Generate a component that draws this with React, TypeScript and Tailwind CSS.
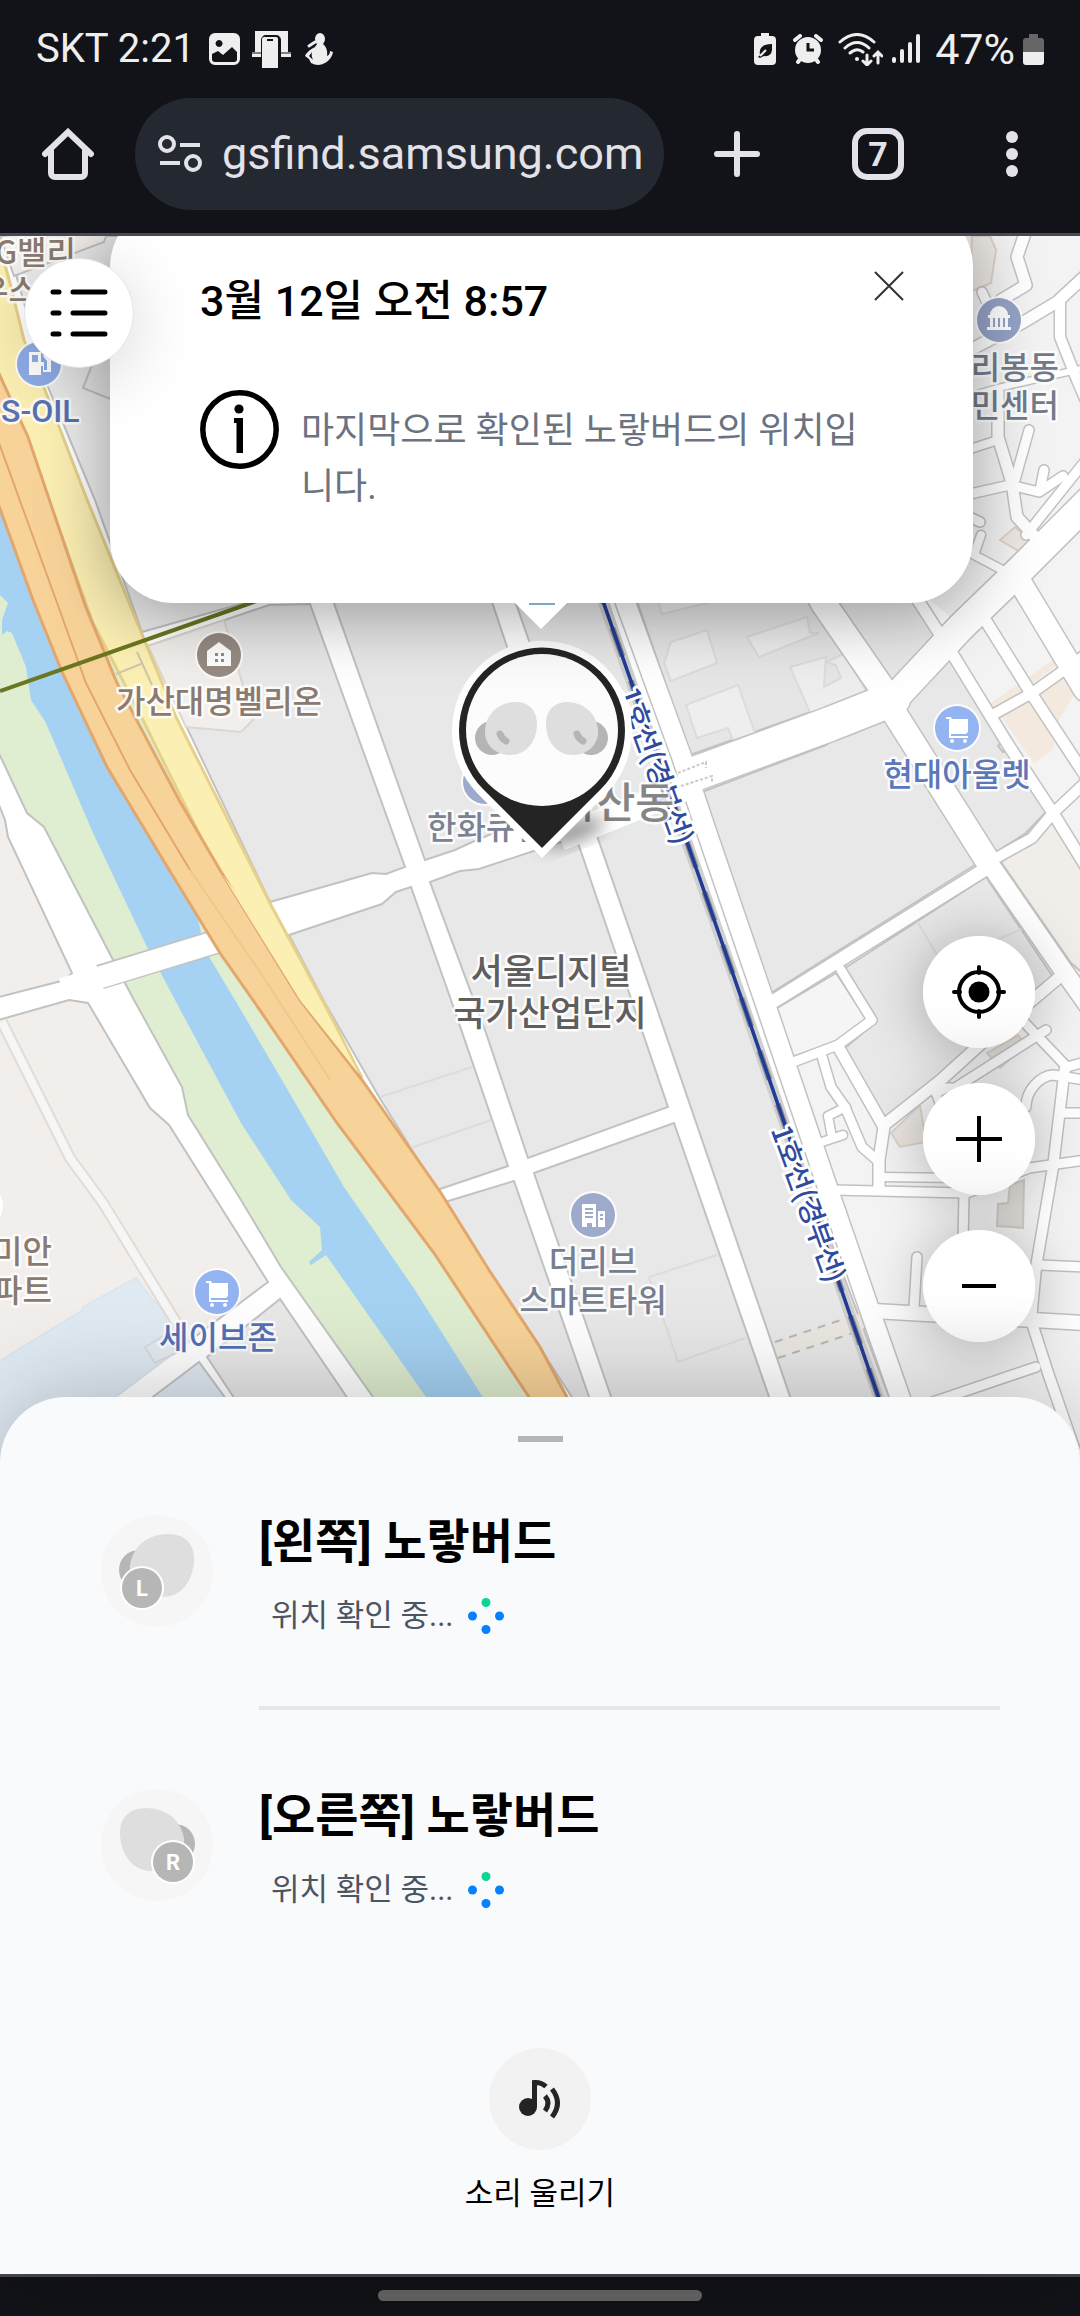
import { ReactNode } from "react";

const FONT = "font-[Roboto,'Noto_Sans_CJK_KR',sans-serif]";

const GREY = "#e8e8e8";
const PALE = "#f3f3f3";
const BEIGE = "#f1eeeb";
const PEACH = "#f4e9df";
const ICE = "#e0eaf3";

interface Block {
  points: string;
  fill: string;
  stroke?: string;
}

interface Road {
  d: string;
  w: number;
}

const blocks: Block[] = [
  // west bank
  { points: "-5,795 5,820 8,837 72,973 65,980 -5,998", fill: BEIGE },
  { points: "-5,1021 69,1000 88,1003 150,1108 169,1125 268,1282 115,1397 -5,1485", fill: BEIGE },
  { points: "-5,1364 83,1310 83,1307 136,1278 155,1303 157,1302 176,1325 190,1341 115,1397 -5,1485", fill: ICE, stroke: "#dbe6ee" },
  { points: "280,1299 207,1357 262,1440 376,1440", fill: GREY },
  { points: "199,1362 96,1440 256,1440", fill: ICE },
  { points: "145,1347 165,1335 176,1353 155,1363", fill: "#e6ecf1", stroke: "#d8dcdf" },
  // between the expressway and the railway
  { points: "5,236 330,236 290,590 142,632 95,500 48,387", fill: "#ebebeb" },
  { points: "0,236 110,225 104,242 14,276", fill: BEIGE },
  { points: "83,388 92,365 120,340 150,415", fill: GREY },
  { points: "148,646 269,605 310,604 405,867 386,874 372,873 270,902", fill: GREY },
  { points: "148,646 224,620 253,720 241,732 186,727", fill: BEIGE, stroke: "#ddd7d0" },
  { points: "324,575 483,575 560,805 470,843 455,850 425,860", fill: GREY },
  { points: "506,575 600,575 668,795 590,815", fill: GREY },
  { points: "430,882 460,871 479,869 576,837 668,1107 528,1158 486,1033", fill: GREY },
  { points: "289,935 382,904 396,892 411,887 451,1000 508,1166 437,1190 379,1097 325,1003", fill: GREY },
  { points: "445,1202 514,1181 604,1440 600,1440 489,1270", fill: GREY },
  { points: "534,1173 674,1123 784,1440 626,1440", fill: GREY },
  { points: "595,830 668,805 905,1440 805,1440 654,1000", fill: GREY },
  // east of the railway
  { points: "628,575 796,575 872,698 846,708 822,708 690,755", fill: "#e6e6e6" },
  { points: "820,575 900,575 938,638 890,687", fill: GREY },
  { points: "702,792 826,745 850,728 884,716 978,863 771,993", fill: GREY },
  { points: "901,706 950,657 1003,740 998,746 1003,752 1010,750 1048,810 1026,833 996,852", fill: GREY },
  { points: "1001,862 1029,843 1052,818 1085,872 1085,975 1071,963", fill: "#f1ede9" },
  { points: "845,968 986,877 1053,977 969,1050 884,1120 845,1048 876,1022", fill: GREY },
  { points: "774,1010 836,973 867,1020 835,1043 788,1058", fill: "#f5f5f5" },
];

const outlines = [
  "664,663 671,642 707,630 717,663 671,681",
  "747,637 807,617 810,633 819,633 759,657",
  "686,705 738,685 755,733 733,740 728,728 697,738",
  "790,667 826,657 824,687 841,678 836,665 826,662 845,653 869,697 812,717",
  "658,600 662,614 720,600",
];

const patches = [
  "991,703 1053,660 1057,665 996,712",
  "1001,717 1029,700 1055,737 1053,750 1034,763",
  "1036,695 1063,675 1074,695 1057,723",
];

const roads: Road[] = [
  { d: "M697 773 L830 724 L893 699", w: 34 },
  { d: "M808 575 L824 604 L893 704", w: 25 },
  { d: "M891 702 L960 628 L1022 568 L1090 500", w: 28 },
  { d: "M893 711 L987 860", w: 24 },
  { d: "M987 860 L1063 970 L1090 1008", w: 18 },
  { d: "M774 1001 L984 870", w: 13 },
  { d: "M841 970 L872 1020 L838 1045 L788 1064", w: 9 },
  { d: "M905 580 L950 650 L1007 743 L1053 813 L1085 865", w: 11 },
  { d: "M984 618 L1029 690 L1085 775", w: 11 },
  { d: "M996 713 L1032 693 L1067 668 L1085 655", w: 10 },
  { d: "M1020 582 L1085 690", w: 22 },
  { d: "M998 857 L1032 838 L1053 813 L1085 783", w: 10 },
  { d: "M821 1053 L831 1087 L845 1107 L862 1147 L877 1160", w: 9 },
  { d: "M840 1050 L884 1127 L879 1160 L879 1187", w: 11 },
  { d: "M884 1125 L941 1080 L985 1040 L1062 975", w: 11 },
  { d: "M833 1190 L967 1193 L1029 1168 L1085 1160", w: 9 },
  { d: "M881 1177 L960 1178", w: 8 },
  { d: "M846 1107 L828 1116 L832 1137", w: 8 },
  { d: "M819 1143 L843 1135", w: 8 },
  { d: "M964 1195 L962 1290", w: 9 },
  { d: "M917 1257 L914 1308", w: 9 },
  { d: "M874 1311 L1085 1323", w: 14 },
  { d: "M1065 1067 L1053 1167 L1036 1267 L1031 1320 L1048 1373 L1080 1465", w: 10 },
  { d: "M1039 1265 L1085 1267", w: 9 },
  { d: "M1063 1113 L1085 1113", w: 9 },
  { d: "M1026 1107 C1026 1090 1040 1076 1053 1075 L1085 1080", w: 9 },
  { d: "M1022 1020 L1067 1067 L1085 1062", w: 9 },
  { d: "M936 1093 L946 1088 L955 1088 L1046 1030", w: 9 },
  { d: "M940 1083 L936 1093 L945 1120", w: 8 },
  { d: "M1036 1367 L930 1403", w: 9 },
  { d: "M1026 230 L1017 257 L1026 285 L1001 300 L990 320", w: 11 },
  { d: "M982 292 L995 320", w: 9 },
  { d: "M1085 276 L1057 302 L1022 323 L970 350", w: 11 },
  { d: "M1060 303 L1060 337 L1077 380 L1090 410", w: 10 },
  { d: "M1085 368 L998 388 L970 396", w: 6 },
  { d: "M998 392 L998 437 L1012 483 L1017 517 L1045 548", w: 11 },
  { d: "M1029 430 L1015 480", w: 9 },
  { d: "M970 449 L998 440", w: 8 },
  { d: "M970 494 L1010 485 L1039 492 L1063 476", w: 9 },
  { d: "M1044 470 L1040 490", w: 9 },
  { d: "M1026 535 L1090 455", w: 9 },
  { d: "M965 515 L980 522", w: 9 },
  { d: "M981 535 L974 555 L1012 575", w: 8 },
];

const pale =
  "580,236 1085,236 1085,1465 930,1465 771,993 987,868 893,711 960,625 900,575";

function Poi({ x, y, fill, children }: { x: number; y: number; fill: string; children?: ReactNode }) {
  return (
    <g transform={`translate(${x} ${y})`}>
      <circle r="24" fill="#fff" opacity="0.85" />
      <circle r="22" fill={fill} />
      {children}
    </g>
  );
}

function Cart() {
  return (
    <g fill="#fff">
      <path d="M-11 -11 h5 l1 2 H11 V4 l-2 2 H-6 V8 H11 v2 H-8 V-9 h-3 Z" />
      <circle cx="-5" cy="13" r="2" />
      <circle cx="8" cy="13" r="2" />
    </g>
  );
}

interface LabelProps {
  x: number;
  y: number;
  color: string;
  size?: number;
  anchor?: "start" | "middle" | "end";
  children: string;
}

function Label({ x, y, color, size = 32, anchor = "middle", children }: LabelProps) {
  return (
    <text
      x={x}
      y={y}
      fill={color}
      fontSize={size}
      textAnchor={anchor}
      stroke="#fff"
      strokeOpacity="0.85"
      strokeWidth="5"
      strokeLinejoin="round"
      paintOrder="stroke"
    >
      {children}
    </text>
  );
}

function RailLabel({ x, y }: { x: number; y: number }) {
  return (
    <text
      transform={`translate(${x} ${y}) rotate(70)`}
      fill="#2f4a9e"
      fontSize="28"
      textAnchor="middle"
      dominantBaseline="central"
      stroke="#fff"
      strokeWidth="6"
      strokeLinejoin="round"
      paintOrder="stroke"
    >
      1호선(경부선)
    </text>
  );
}

function Bud({ flip }: { flip?: boolean }) {
  return (
    <>
      <g transform={flip ? "translate(1083 0) scale(-1 1)" : undefined}>
        <circle cx="492" cy="738" r="17" fill="#b5b5b5" />
        <path
          d="M485 730 C486 713 500 702 516 702 C530 702 537 712 537 724 C537 742 526 755 510 755 C496 755 484 745 485 730 Z"
          fill="#dedede"
        />
      </g>
      <path
        d={flip ? "M577 734 Q578 738 583 741" : "M500 734 Q501 738 506 741"}
        fill="none"
        stroke="#b5b5b5"
        strokeWidth="7"
        strokeLinecap="round"
      />
    </>
  );
}

function MapCanvas() {
  return (
    <svg
      viewBox="0 236 1080 1224"
      preserveAspectRatio="xMidYMin slice"
      className="absolute inset-0 h-full w-full font-['Noto_Sans_CJK_KR',sans-serif] font-medium"
      role="img"
      aria-label="지도"
    >
      <defs>
        <filter id="pinShadow" x="-50%" y="-50%" width="200%" height="200%">
          <feGaussianBlur stdDeviation="9" />
        </filter>
      </defs>
      <rect x="-20" y="200" width="1120" height="1300" fill="#fff" />
      <polygon points={pale} fill={PALE} />

      {blocks.map((b) => (
        <polygon key={b.points} points={b.points} fill={b.fill} stroke={b.stroke ?? "#c2c2c2"} strokeWidth="2" />
      ))}
      {outlines.map((p) => (
        <polygon key={p} points={p} fill="#eeeeee" stroke="#dcdcdc" strokeWidth="2" />
      ))}
      <g fill="none" stroke="#dcdcdc" strokeWidth="2">
        <path d="M380 1097 L472 1067 M411 1148 L491 1120 M717 1255 L649 1277 L678 1362 L745 1338" />
        <path d="M917 921 L937 955 M980 947 L1022 929" />
      </g>
      <polygon points="775,1342 865,1312 868,1328 778,1358" fill="#ebe8e2" />
      <path d="M775 1342 L865 1312 M778 1358 L868 1328" stroke="#b8b8b8" strokeWidth="2" strokeDasharray="8 7" />

      {/* residential lane on the west side */}
      <path d="M2 1022 L70 1158 L103 1203 L176 1322" fill="none" stroke="#e3dcd5" strokeWidth="12" />
      <path d="M2 1022 L70 1158 L103 1203 L176 1322" fill="none" stroke="#f6f6f6" strokeWidth="8" />

      {/* river park and water */}
      <path
        d="M-5 480 L41 630 L110 600 L160 740 L240 903 L320 1080 L434 1253 L540 1410 L540 1440 L399 1440 L373 1397 L281 1267 L241 1200 L188 1115 L182 1087 L134 1000 L125 983 L112 958 L44 827 L27 813 L-5 745 Z"
        fill="#dfedd0"
        stroke="#c2c2c2"
        strokeWidth="2"
      />
      <path
        d="M-5 490 L60 610 L130 767 L190 880 L201 933 L208 955 L235 1000 L286 1087 L344 1187 L413 1287 L510 1440 L452 1440 L426 1397 L326 1255 L311 1265 L309 1262 L322 1250 L320 1227 L291 1200 L241 1123 L175 1000 L146 945 L93 833 L46 723 L31 700 L26 667 L12 633 L7 631 L2 635 L2 620 L8 603 L-5 590 Z"
        fill="#a5d2f3"
      />
      <path d="M100 977 L225 939" stroke="#c2c2c2" strokeWidth="25" />
      <path d="M62 989 L235 936" stroke="#fff" strokeWidth="22" />

      {/* expressway */}
      <path
        d="M-5 240 L0 247 L10 283 L24 340 L45 390 L86 497 L130 605 L176 717 L272 907 L325 1005 L362 1078 L300 1020 L207 850 L138 710 L93 623 L62 537 L21 430 L-5 365 Z"
        fill="#fbefb3"
        stroke="#e6d18a"
        strokeWidth="3"
      />
      <path
        d="M-5 365 L28 437 L62 537 L85 605 L117 683 L179 800 L220 870 L300 1000 L362 1080 L441 1193 L489 1270 L540 1347 L590 1440 L558 1440 L529 1397 L434 1253 L337 1123 L255 1003 L220 953 L165 863 L107 767 L62 672 L33 600 L-5 495 Z"
        fill="#f8d399"
        stroke="#e3a76c"
        strokeWidth="3"
      />
      <path d="M222 874 L272 940 L331 1020 L359 1074 L300 1000 Z" fill="#fbefb3" />
      <path d="M-5 432 L56 600 L86 683 L130 770 L190 870" fill="none" stroke="#e3a76c" strokeWidth="2" />
      <path d="M190 870 L262 975 L330 1080" fill="none" stroke="#f2c58c" strokeWidth="2" />
      <path d="M116 674 L141 664 M137 652 L152 685" stroke="#cfc6ae" strokeWidth="2" />
      <path d="M0 691 L248 604 L300 586" fill="none" stroke="#6b7620" strokeWidth="4" />

      {/* railway corridor */}
      <path d="M616 575 L626 604 L681 755 L706 830 L765 1003 L826 1183 L868 1305 L915 1440" fill="none" stroke="#c2c2c2" strokeWidth="22" />

      {/* streets: casings first so the junctions merge */}
      {patches.map((p) => (
        <polygon key={p} points={p} fill={PEACH} />
      ))}
      <polygon points="972,236 990,236 996,250 991,283 970,292" fill="#ece8e4" stroke="#dcd2c8" strokeWidth="2" />
      <polygon points="1015,527 1032,542 1022,553 1000,540" fill="#ede8e3" stroke="#dcd2c8" strokeWidth="2" />
      <polygon points="891,1133 920,1105 926,1142 900,1147" fill="#e9e4e0" stroke="#dcd2c8" strokeWidth="2" />
      <polygon points="1010,1185 1024,1180 1023,1228 997,1226 998,1204 1008,1203" fill="#dfdcd8" stroke="#d2cbc4" strokeWidth="2" />
      <polygon points="987,1053 1018,1035 1026,1045 1000,1068" fill="#e6e1dc" stroke="#dcd2c8" strokeWidth="2" />
      <g fill="none" stroke="#c2c2c2" strokeLinecap="round" strokeLinejoin="round">
        {roads.map((r) => (
          <path key={r.d} d={r.d} strokeWidth={r.w + 3} />
        ))}
      </g>
      <path d="M616 575 L626 604 L681 755 L706 830 L765 1003 L826 1183 L868 1305 L915 1440" fill="none" stroke="#fff" strokeWidth="19" />
      <g fill="none" stroke="#fff" strokeLinecap="round" strokeLinejoin="round">
        {roads.map((r) => (
          <path key={r.d} d={r.d} strokeWidth={r.w} />
        ))}
      </g>
      <path d="M560 838 L690 786" stroke="#fff" strokeWidth="26" />
      <path d="M678 773 L706 762 v6 M681 786 L712 776 v6" fill="none" stroke="#cfc8c0" strokeWidth="2" strokeDasharray="3 2" />

      <g fill="none">
        <path d="M594 575 L604 604 L633 687 L687 842 L742 1000 L785 1125 L838 1280 L895 1445" stroke="#cfcfcf" strokeWidth="11" />
        <path
          d="M594 575 L604 604 L633 687 L687 842 L742 1000 L785 1125 L838 1280 L895 1445"
          stroke="#8d8d95"
          strokeWidth="6"
          strokeDasharray="30 26"
        />
        <path d="M594 575 L604 604 L633 687 L687 842 L742 1000 L785 1125 L838 1280 L895 1445" stroke="#213c94" strokeWidth="3.6" />
      </g>
      <RailLabel x={658} y={765} />
      <RailLabel x={810} y={1203} />

      <Poi x={39} y={364} fill="#8eace6">
        <path d="M-10 -12 h12 v10 h3 v8 h3 v-9 l-4 -5 2 -2 6 6 v12 h-8 v-6 h-2 v9 h-12 Z M-7 -9 v7 h6 v-7 Z" fill="#fff" fillRule="evenodd" />
      </Poi>
      <Poi x={219} y={655} fill="#978b83">
        <path d="M0 -13 L12 -4 V11 H-12 V-4 Z" fill="#fff" />
        <path d="M-4 -2 h3 v3 h-3 Z M2 -2 h3 v3 h-3 Z M-4 4 h3 v3 h-3 Z M2 4 h3 v3 h-3 Z" fill="#978b83" />
      </Poi>
      <Poi x={999} y={320} fill="#95a3c6">
        <path d="M-11 -5 h2 a9 9 0 0 1 18 0 h2 v3 h-2 v9 h3 v3 h-24 v-3 h3 v-9 h-2 Z" fill="#fff" />
        <path d="M-5 -2 v9 M0 -2 v9 M5 -2 v9" stroke="#95a3c6" strokeWidth="2" />
      </Poi>
      <Poi x={957} y={728} fill="#94b3f1">
        <Cart />
      </Poi>
      <Poi x={217} y={1292} fill="#94b3f1">
        <Cart />
      </Poi>
      <Poi x={593} y={1215} fill="#9daacb">
        <path d="M-11 -11 h14 v23 h-4 v-4 h-5 v4 h-5 Z M5 -4 h7 v16 h-7 Z" fill="#fff" />
        <path d="M-8 -6 h8 M-8 -2 h8 M-8 2 h8 M7 0 h3 M7 4 h3" stroke="#9daacb" strokeWidth="2" />
      </Poi>
      <Poi x={485} y={782} fill="#9daacb" />

      <Label x={76} y={264} color="#8a7a70" anchor="end">G밸리</Label>
      <Label x={38} y={302} color="#8a7a70" anchor="end">우스</Label>
      <g className="font-[Roboto,sans-serif]">
        <Label x={1} y={422} color="#5872b4" anchor="start">S-OIL</Label>
      </g>
      <Label x={219} y={713} color="#8a7a70">가산대명벨리온</Label>
      <Label x={1059} y={379} color="#737a8b" anchor="end">리봉동</Label>
      <Label x={1059} y={417} color="#737a8b" anchor="end">민센터</Label>
      <Label x={957} y={786} color="#5b76ba">현대아울렛</Label>
      <Label x={427} y={839} color="#7a8294" anchor="start">한화큐셀</Label>
      <Label x={674} y={818} color="#858585" size={42} anchor="end">가산동</Label>
      <Label x={551} y={984} color="#5e5e5e" size={35}>서울디지털</Label>
      <Label x={550} y={1026} color="#5e5e5e" size={35}>국가산업단지</Label>
      <Label x={593} y={1273} color="#767e90">더리브</Label>
      <Label x={593} y={1312} color="#767e90">스마트타워</Label>
      <Label x={218} y={1349} color="#5571b4">세이브존</Label>
      <Label x={52} y={1263} color="#8a7a70" anchor="end">미안</Label>
      <Label x={52} y={1302} color="#8a7a70" anchor="end">파트</Label>
      <circle cx="-19" cy="1206" r="22" fill="#fff" />

      {/* location pin */}
      <ellipse cx="572" cy="832" rx="34" ry="10" transform="rotate(-20 572 832)" fill="#000" opacity="0.45" filter="url(#pinShadow)" />
      <path d="M542 858 L478 794 A90 90 0 1 1 606 794 Z" fill="#fff" />
      <path d="M542 848 L483 789 A83 83 0 1 1 601 789 Z" fill="#242424" />
      <circle cx="542" cy="730" r="76" fill="#fcfcfc" />
      <Bud />
      <Bud flip />
    </svg>
  );
}

function StatusIcons() {
  return (
    <>
      <svg viewBox="0 0 31 32" className="ml-3.5 h-8 w-[31px]" fill="#eee" aria-hidden="true">
        <path
          fillRule="evenodd"
          d="M6 0 H25 a6 6 0 0 1 6 6 V26 a6 6 0 0 1 -6 6 H6 a6 6 0 0 1 -6 -6 V6 a6 6 0 0 1 6 -6 Z M10 7 a3.5 3.5 0 1 0 .1 0 Z M3 21 V26 a3 3 0 0 0 3 3 H25 a3 3 0 0 0 3 -3 V19 L23 14 L14 22 L9 18 Z"
        />
      </svg>
      <svg viewBox="0 0 39 38" className="ml-3 h-[38px] w-[39px]" fill="#eee" aria-hidden="true">
        <path d="M3 1 H36 V22 H39 V27 H29 V10 a5 5 0 0 0 -5 -5 H14 a5 5 0 0 0 -5 5 V27 H0 V22 H3 Z" />
        <path d="M12 7 H24 a2 2 0 0 1 2 2 V38 H10 V9 a2 2 0 0 1 2 -2 Z M15 9 v2 h6 v-2 Z" fillRule="evenodd" />
        <path d="M0 23 H9 M29 23 H39" stroke="#121318" strokeWidth="1" />
      </svg>
      <svg viewBox="0 0 28 32" className="ml-3.5 h-8 w-7" fill="#eee" aria-hidden="true">
        <ellipse cx="15" cy="6" rx="5" ry="6" />
        <path d="M12 11 L18 11 Q23 15 22 23 Q25 22 25 18 L28 19 Q27 26 20 30 Q13 34 6 30 L4 26 L0 23 Q2 18 10 14 Z M7 19 L4 23 L8 27 Q6 23 7 19 Z" fillRule="evenodd" />
        <path d="M10 9 L4 13" stroke="#eee" strokeWidth="3" strokeLinecap="round" />
      </svg>
    </>
  );
}

function SystemIcons() {
  return (
    <>
      <svg viewBox="0 0 22 32" className="mr-[17px] h-8 w-[22px]" aria-hidden="true">
        <path d="M7 0 H15 V3 H18 a4 4 0 0 1 4 4 V28 a4 4 0 0 1 -4 4 H4 a4 4 0 0 1 -4 -4 V7 a4 4 0 0 1 4 -4 H7 Z" fill="#eee" />
        <path d="M18 11 V17 q-1 7 -8 6 l-4 2 -2 -1 2 -2 q-2 -11 12 -11 Z" fill="#121318" />
        <path d="M6 23 L12 17" stroke="#eee" strokeWidth="2" />
      </svg>
      <svg viewBox="0 0 30 30" className="mr-[15px] h-[30px] w-[30px]" aria-hidden="true">
        <circle cx="15" cy="16" r="13" fill="#eee" />
        <path d="M2 6 L7 2 M28 6 L23 2 M5 28 L8 24 M25 28 L22 24" stroke="#eee" strokeWidth="4" strokeLinecap="round" />
        <path d="M15 9 V16 H21" fill="none" stroke="#121318" strokeWidth="3" />
      </svg>
      <svg viewBox="0 0 45 33" className="mr-[9px] h-[33px] w-[45px]" fill="none" stroke="#eee" strokeWidth="3" strokeLinecap="round" aria-hidden="true">
        <path d="M2 9 Q19 -6 36 9 M7 15 Q19 4 31 15 M12 20 Q19 14 25 19" />
        <circle cx="19" cy="26" r="2" fill="#eee" stroke="none" />
        <path d="M29 22 V31 M25 28 L29 32 L33 28 M40 30 V20 M36 23 L40 19 L44 23" />
      </svg>
      <svg viewBox="0 0 28 30" className="mr-[15px] h-[30px] w-7" stroke="#eee" strokeWidth="4" strokeLinecap="round" aria-hidden="true">
        <path d="M2 25 V27 M10 17 V27 M18 10 V27 M26 2 V27" />
      </svg>
    </>
  );
}

function BrowserBar() {
  return (
    <header className="border-b-[3px] border-[#4a4953] bg-[#121318] text-[#e3e2e9]">
      <div className="flex h-[98px] items-center pr-9 pl-9 text-[40px] text-[#eeeeee]">
        <span>SKT 2:21</span>
        <StatusIcons />
        <div className="ml-auto flex items-center">
          <SystemIcons />
          <span className="text-[43px]">47%</span>
          <svg viewBox="0 0 21 31" className="ml-2 h-[31px] w-[21px]" aria-hidden="true">
            <path d="M6 0 H15 V4 H18 a3 3 0 0 1 3 3 V19 H0 V7 a3 3 0 0 1 3 -3 H6 Z" fill="#666" />
            <path d="M0 18 H21 V28 a3 3 0 0 1 -3 3 H3 a3 3 0 0 1 -3 -3 Z" fill="#eee" />
          </svg>
        </div>
      </div>

      <div className="flex items-center pr-[62px] pb-[23px] pl-[42px]">
        <button type="button" aria-label="홈">
          <svg viewBox="0 0 52 52" className="h-[52px] w-[52px]" fill="none" stroke="currentColor" strokeWidth="6" aria-hidden="true">
            <path d="M3 26 L26 4 L49 26" strokeLinecap="round" />
            <path d="M9 22 V45 a4 4 0 0 0 4 4 H39 a4 4 0 0 0 4 -4 V22" />
          </svg>
        </button>
        <div className="ml-[41px] flex h-28 min-w-0 flex-1 items-center rounded-full bg-[#242831] pr-3.5 pl-[23px]">
          <svg viewBox="0 0 44 38" className="h-[38px] w-11 shrink-0" fill="none" stroke="currentColor" strokeWidth="4" aria-hidden="true">
            <circle cx="9" cy="9" r="7" />
            <circle cx="35" cy="28" r="7" />
            <path d="M22 10 H42 M2 28 H22" />
          </svg>
          <input
            type="text"
            aria-label="주소"
            readOnly
            value="gsfind.samsung.com"
            className="ml-5 min-w-0 flex-1 bg-transparent text-[45px] outline-none"
          />
        </div>
        <button type="button" aria-label="새 탭" className="ml-[50px]">
          <svg viewBox="0 0 46 46" className="h-[46px] w-[46px]" stroke="currentColor" strokeWidth="6" strokeLinecap="round" aria-hidden="true">
            <path d="M23 3 V43 M3 23 H43" />
          </svg>
        </button>
        <button
          type="button"
          aria-label="탭 7개"
          className="ml-[92px] flex h-[52px] w-[52px] items-center justify-center rounded-[15px] border-[6px] border-current text-[34px] leading-none font-bold"
        >
          7
        </button>
        <button type="button" aria-label="메뉴" className="ml-[102px]">
          <svg viewBox="0 0 12 46" className="h-[46px] w-3" fill="currentColor" aria-hidden="true">
            <circle cx="6" cy="6" r="6" />
            <circle cx="6" cy="23" r="6" />
            <circle cx="6" cy="40" r="6" />
          </svg>
        </button>
      </div>
    </header>
  );
}

function InfoCard() {
  return (
    <section className="absolute top-[-33px] right-[107px] left-[110px] rounded-[64px] bg-white pt-[68px] pr-[69px] pb-[88px] pl-[90px] shadow-[0_12px_70px_rgba(0,0,0,0.35)]">
      <div className="flex items-start justify-between">
        <h1 className="text-[43px] leading-[60px] font-medium text-black">3월 12일 오전 8:57</h1>
        <button type="button" aria-label="닫기">
          <svg viewBox="0 0 30 30" className="h-[30px] w-[30px]" stroke="#333" strokeWidth="2" aria-hidden="true">
            <path d="M1 1 L29 29 M29 1 L1 29" />
          </svg>
        </button>
      </div>
      <div className="mt-[59px] flex items-start pr-6">
        <svg viewBox="0 0 79 79" className="h-[79px] w-[79px] shrink-0" aria-hidden="true">
          <circle cx="39.5" cy="39.5" r="36.7" fill="none" stroke="#000" strokeWidth="5.5" />
          <circle cx="39" cy="19" r="4.6" />
          <path d="M34 28 H43 V63 H36.5 V33 H34 Z" />
        </svg>
        <p className="mt-[13px] ml-[22px] text-[36px] leading-[56px] break-all text-[#6b7280]">
          마지막으로 확인된 노랗버드의 위치입니다.
        </p>
      </div>
      <svg viewBox="0 0 52 26" className="absolute top-full left-[405px] h-[26px] w-[52px]" aria-hidden="true">
        <path d="M0 0 H52 L26 26 Z" fill="#fff" />
        <path d="M14 1 H40" stroke="#7ba6c4" strokeWidth="2" />
      </svg>
    </section>
  );
}

const controlClass =
  "flex h-28 w-28 items-center justify-center rounded-full bg-linear-to-b from-white from-60% to-[#f7f7f7] shadow-[0_4px_60px_rgba(0,0,0,0.3)]";

function MapControls() {
  return (
    <div className="absolute top-[700px] right-[45px] flex flex-col gap-[35px]">
      <button type="button" aria-label="현재 위치" className={controlClass}>
        <svg viewBox="0 0 54 54" className="h-[54px] w-[54px]" aria-hidden="true">
          <circle cx="27" cy="27" r="20" fill="none" stroke="#000" strokeWidth="4" />
          <circle cx="27" cy="27" r="10.5" />
          <path d="M27 2 V8 M27 46 V52 M2 27 H8 M46 27 H52" stroke="#000" strokeWidth="4" strokeLinecap="round" />
        </svg>
      </button>
      <button type="button" aria-label="확대" className={controlClass}>
        <svg viewBox="0 0 46 46" className="h-[46px] w-[46px]" stroke="#000" strokeWidth="4" aria-hidden="true">
          <path d="M23 0 V46 M0 23 H46" />
        </svg>
      </button>
      <button type="button" aria-label="축소" className={controlClass}>
        <svg viewBox="0 0 34 4" className="h-1 w-[34px]" aria-hidden="true">
          <rect width="34" height="4" />
        </svg>
      </button>
    </div>
  );
}

function BudAvatar({ side }: { side: "L" | "R" }) {
  const right = side === "R";
  const badgeX = right ? 72 : 41;
  return (
    <svg viewBox="0 0 112 112" className="mt-1 h-28 w-28 shrink-0" aria-hidden="true">
      <circle cx="56" cy="56" r="56" fill="#f6f6f6" />
      <g transform={right ? "translate(112 0) scale(-1 1)" : undefined}>
        <circle cx="38" cy="55" r="20" fill="#b6b6b6" />
        <path d="M29 50 C32 30 48 19 67 19 C85 19 94 30 93 47 C91 68 79 82 62 82 C42 82 27 68 29 50 Z" fill="#dedede" />
      </g>
      <circle cx={badgeX} cy="73" r="22" fill="#fff" />
      <circle cx={badgeX} cy="73" r="20" fill="#b6b6b6" />
      <text x={badgeX} y="81" textAnchor="middle" fontSize="22" fontWeight="700" fill="#fff">
        {side}
      </text>
    </svg>
  );
}

function Spinner() {
  return (
    <svg viewBox="0 0 36 36" className="h-9 w-9" fill="#0381fe" role="status" aria-label="확인 중">
      <circle cx="18" cy="4.5" r="4.5" fill="#0bd596" />
      <circle cx="31.5" cy="18" r="4.5" />
      <circle cx="18" cy="31.5" r="4.5" />
      <circle cx="4.5" cy="18" r="4.5" />
    </svg>
  );
}

function DeviceRow({ side, name, last }: { side: "L" | "R"; name: string; last?: boolean }) {
  return (
    <li className="flex gap-[46px] pr-20 pl-[101px]">
      <BudAvatar side={side} />
      <div className={last ? "flex-1" : "mb-[75px] flex-1 border-b-4 border-[#e5e7eb] pb-[66px]"}>
        <h2 className="text-[47px] leading-[62px] font-bold text-black">{name}</h2>
        <div className="mt-[19px] flex h-12 items-center gap-3.5 pl-3 text-[31px] text-[#4b5563]">
          <span>위치 확인 중...</span>
          <Spinner />
        </div>
      </div>
    </li>
  );
}

function DeviceSheet() {
  return (
    <section className="relative z-10 -mt-[63px] flex flex-col items-center rounded-t-[66px] bg-[#f9fafc] pt-[39px] pb-[58px] shadow-[0_0_100px_rgba(0,0,0,0.25)]">
      <div className="h-[6px] w-[45px] bg-[#b5b5b7]" />
      <ul className="mt-[69px] w-full">
        <DeviceRow side="L" name="[왼쪽] 노랗버드" />
        <DeviceRow side="R" name="[오른쪽] 노랗버드" last />
      </ul>
      <button type="button" className="mt-[134px] flex flex-col items-center text-[31px] leading-[44px] text-black">
        <span className="flex h-[102px] w-[102px] items-center justify-center rounded-full bg-[#f2f2f2]">
          <svg viewBox="0 0 42 40" className="h-10 w-[42px]" fill="none" stroke="#242424" strokeWidth="5" aria-hidden="true">
            <circle cx="9" cy="28" r="9" fill="#242424" stroke="none" />
            <path d="M15.5 28 V3.5 Q22 3 27 7.5" />
            <path d="M26 17 Q32 24 26 32" />
            <path d="M33 10 Q44 24 33 38" />
          </svg>
        </span>
        <span className="mt-[22px]">소리 울리기</span>
      </button>
    </section>
  );
}

export default function App() {
  return (
    <div className={`flex min-h-screen flex-col bg-[#f9fafc] ${FONT}`}>
      <BrowserBar />
      <main className="flex flex-1 flex-col">
        <div className="relative min-h-[1000px] flex-1 overflow-hidden">
          <MapCanvas />
          <InfoCard />
          <button
            type="button"
            aria-label="기기 목록"
            className="absolute top-[22px] left-6 flex h-[110px] w-[110px] items-center justify-center rounded-full border border-[#e3e4ea] bg-white shadow-[0_12px_70px_rgba(0,0,0,0.16)]"
          >
            <svg viewBox="0 0 58 48" className="h-12 w-[58px]" stroke="#000" strokeWidth="5" strokeLinecap="round" aria-hidden="true">
              <path d="M3 3 H9 M23 3 H55 M3 24 H9 M23 24 H55 M3 45 H9 M23 45 H55" />
            </svg>
          </button>
          <MapControls />
        </div>
        <DeviceSheet />
      </main>
      <footer className="flex justify-center border-t-[3px] border-[#4a4953] bg-[#121318] pt-[13px] pb-[15px]">
        <div className="h-[11px] w-[30%] rounded-full bg-[#676767]" />
      </footer>
    </div>
  );
}
